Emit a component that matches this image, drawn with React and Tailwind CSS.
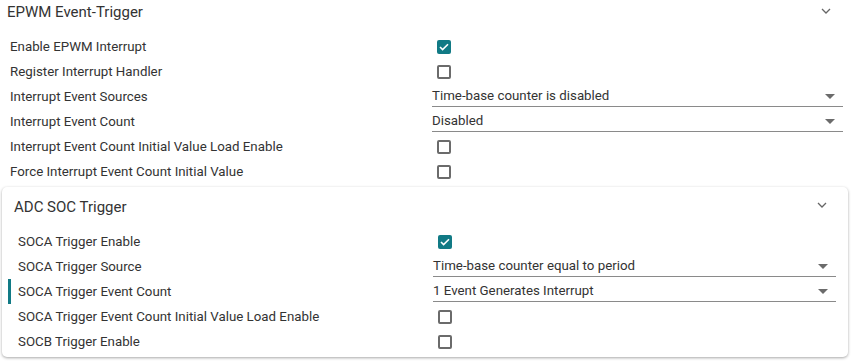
const TEAL = "bg-[#117a85]";

const Chevron = () => (
  <svg width="10" height="6" viewBox="0 0 10 6" className="text-[#666]">
    <path d="M1 1l4 4 4-4" fill="none" stroke="currentColor" strokeWidth="1.3" />
  </svg>
);

const Checkbox = ({ checked }) =>
  checked ? (
    <span className={`flex h-[14px] w-[14px] items-center justify-center rounded-[2px] ${TEAL}`}>
      <svg width="10" height="8" viewBox="0 0 10 8">
        <path d="M1 4l2.6 2.6L9 1.2" fill="none" stroke="white" strokeWidth="1.6" />
      </svg>
    </span>
  ) : (
    <span className="block h-[14px] w-[14px] rounded-[2px] border-2 border-[#6b6b6b] bg-white" />
  );

const Select = ({ value }) => (
  <div className="flex h-[21px] items-center justify-between border-b border-[#8a8a8a] pr-[8px]">
    <span>{value}</span>
    <span className="h-0 w-0 border-x-[5px] border-t-[5px] border-x-transparent border-t-[#6b6b6b]" />
  </div>
);

const Row = ({ label, control, active, labelW }) => (
  <div className="relative flex h-[25px] items-center">
    {active && <span className={`absolute left-[-10px] top-0 h-[25px] w-[3px] ${TEAL}`} />}
    <div className={`shrink-0 ${labelW}`}>{label}</div>
    <div className="flex-1">
      {control.type === "check" ? (
        <div className="pl-[5px]">
          <Checkbox checked={control.checked} />
        </div>
      ) : (
        <Select value={control.value} />
      )}
    </div>
  </div>
);

const epwm = [
  { label: "Enable EPWM Interrupt", control: { type: "check", checked: true } },
  { label: "Register Interrupt Handler", control: { type: "check" } },
  { label: "Interrupt Event Sources", control: { type: "select", value: "Time-base counter is disabled" } },
  { label: "Interrupt Event Count", control: { type: "select", value: "Disabled" } },
  { label: "Interrupt Event Count Initial Value Load Enable", control: { type: "check" } },
  { label: "Force Interrupt Event Count Initial Value", control: { type: "check" } },
];

const adc = [
  { label: "SOCA Trigger Enable", control: { type: "check", checked: true } },
  { label: "SOCA Trigger Source", control: { type: "select", value: "Time-base counter equal to period" } },
  { label: "SOCA Trigger Event Count", control: { type: "select", value: "1 Event Generates Interrupt" }, active: true },
  { label: "SOCA Trigger Event Count Initial Value Load Enable", control: { type: "check" } },
  { label: "SOCB Trigger Enable", control: { type: "check" } },
];

export default function App() {
  return (
    <div
      className="h-[364px] w-[851px] overflow-hidden bg-white text-[13.3px] text-[#333]"
      style={{ fontFamily: "Roboto, 'Liberation Sans', sans-serif" }}
    >
      {/* ── EPWM section ── */}
      <div className="flex h-[34px] items-start justify-between pl-[7px] pr-[20px] pt-[1px]">
        <span className="text-[15px] leading-[22px]">EPWM Event-Trigger</span>
        <span className="pt-[7px]">
          <Chevron />
        </span>
      </div>
      <div className="pl-[10px] pr-[8px]">
        {epwm.map((r) => (
          <Row key={r.label} {...r} labelW="w-[422px]" />
        ))}
      </div>

      {/* ── ADC card ── */}
      <div className="mx-[2px] mt-[3px] w-[846px] rounded-[5px] bg-white pb-[3px] shadow-[0_1px_3px_rgba(0,0,0,0.35)]">
        <div className="flex h-[42px] items-center justify-between pl-[12px] pr-[21px]">
          <span className="mb-[2px] text-[15px]">ADC SOC Trigger</span>
          <span className="mb-[6px]">
            <Chevron />
          </span>
        </div>
        <div className="pl-[16px] pr-[12px]">
          {adc.map((r) => (
            <Row key={r.label} {...r} labelW="w-[415px]" />
          ))}
        </div>
      </div>
    </div>
  );
}
